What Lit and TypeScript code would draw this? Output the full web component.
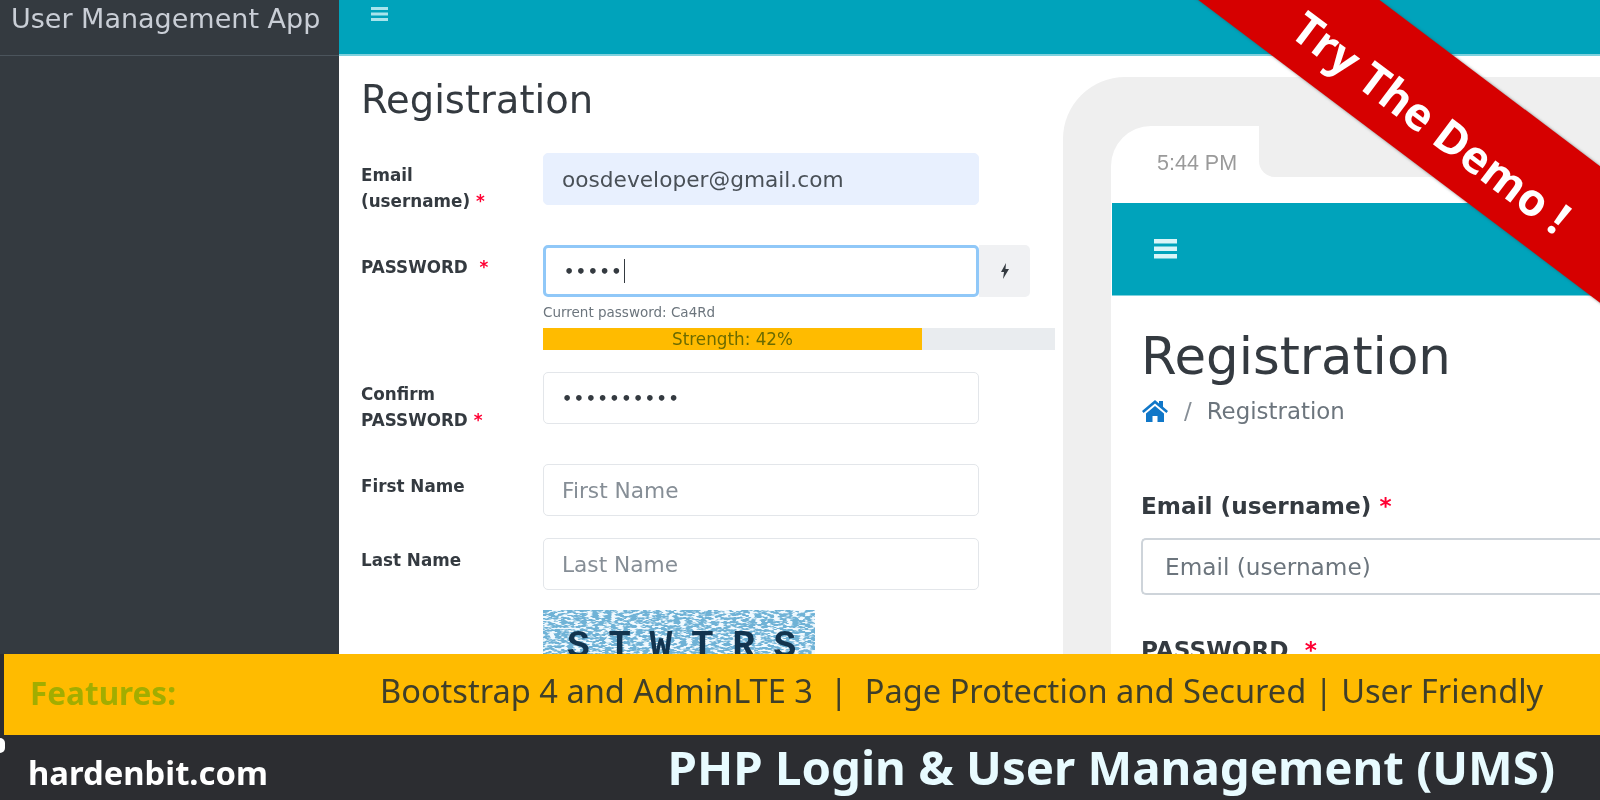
import { LitElement, html, css } from "lit";
import { customElement } from "lit/decorators.js";

@customElement("app-root")
export class AppRoot extends LitElement {
  static styles = css`
    :host { display: block; width: 1600px; height: 800px; overflow: hidden; position: relative; background: #2c2d31; font-family: "DejaVu Sans", sans-serif; filter: blur(0.45px); }
    .top { height: 654px; display: grid; grid-template-columns: 339px 1fr; overflow: hidden; background: #343a40; }
    .side { background: #343a40; }
    .brand { border-bottom: 1px solid #4b545c; color: #c9ced6; font-size: 27px; line-height: 36px; padding: 1px 0 0 11px; box-sizing: border-box; height: 56px; white-space: nowrap; }
    .main { background: #fff; display: flex; flex-direction: column; min-width: 0; }
    .head { height: 56px; box-sizing: border-box; flex: none; background: #00a3bb; border-bottom: 2px solid #7fd1dd; padding: 7px 0 0 32px; }
    .burger { display: block; }
    .body { flex: 1; display: flex; min-height: 0; }
    .form { width: 724px; flex: none; padding: 0 0 0 22px; box-sizing: border-box; }
    h1 { margin: 0; font-weight: 400; color: #343a40; font-size: 38.500px; line-height: 46px; padding-top: 21px; height: 97px; box-sizing: border-box; }
    .row { display: grid; grid-template-columns: 182px 436px 51px; grid-template-rows: 52px; align-items: start; }
    .lab { font-size: 16.800px; font-weight: 700; color: #343a40; line-height: 26px; padding-top: 9px; white-space: nowrap; }
    .star { color: #ff0033; }
    .inp { height: 52px; box-sizing: border-box; border: 1.5px solid #e3e6ea; border-radius: 5px; background: #fff; display: flex; align-items: center; padding-left: 18px; font-size: 21.700px; color: #868e96; }
    .email { background: #e8f0fe; border-color: #e8f0fe; color: #495057; }
    .focus { border: 3px solid #90c8f8; color: #343a40; }
    .dots { color: #343a40; letter-spacing: 1.600px; font-size: 16px; font-weight: 700; }
    .caret { width: 1px; height: 24px; background: #343a40; margin-left: 1px; }
    .addon { height: 52px; background: #f0f1f3; border-radius: 0 5px 5px 0; display: flex; align-items: center; justify-content: center; }
    .hint { font-size: 13.500px; color: #6c757d; margin: 7px 0 0 182px; line-height: 16px; white-space: nowrap; }
    .meter { margin: 8px 0 0 182px; width: 512px; height: 22px; background: #e9ecef; }
    .fill { height: 100%; width: 379px; background: #ffbb00; text-align: center; font-size: 16.800px; line-height: 22px; color: #6b6b00; white-space: nowrap; }
    .captcha { margin: 0 0 0 182px; width: 272px; height: 60px; position: relative; overflow: hidden; background: #6fb2d6; }
    .captcha svg { position: absolute; inset: 0; }
    .letters { position: absolute; left: 24px; top: 18px; line-height: 1; font-family: "Liberation Mono", monospace; font-weight: 700; font-size: 38px; letter-spacing: 18.500px; color: #12344f; white-space: nowrap; }
    .phone { flex: 1; position: relative; min-width: 0; }
    .frame { position: absolute; left: 0; top: 21px; width: 640px; height: 700px; box-sizing: border-box; background: #efefef; border-radius: 62px 0 0 0; padding: 49px 0 0 48px; }
    .screen { background: #fff; height: 100%; border-radius: 40px 0 0 0; position: relative; }
    .notchwrap { position: absolute; left: 148px; top: 0; width: 360px; height: 51px; background: #efefef; border-radius: 0 0 0 16px; }
    .time { position: absolute; left: 46px; top: 25px; font-family: "Liberation Sans", sans-serif; font-size: 21.500px; color: #9a9a9a; white-space: nowrap; }
    .phead { position: absolute; left: 1px; right: 0; top: 77px; height: 93px; background: #00a3bb; border-bottom: 1px solid #7fd1dd; box-sizing: border-box; }
    .phead svg { position: absolute; left: 42px; top: 36px; }
    .pcontent { position: absolute; left: 30px; top: 200px; width: 540px; white-space: nowrap; }
    .pcontent h2 { margin: 0; font-weight: 400; font-size: 51.400px; line-height: 60px; color: #343a40; }
    .crumb { display: flex; align-items: center; font-size: 22.900px; color: #6c757d; margin-top: 10px; height: 30px; }
    .sep { margin: 0 15px; color: #868e96; }
    .plab { font-weight: 700; font-size: 23.200px; color: #343a40; margin-top: 65px; line-height: 30px; }
    .pinp { height: 57px; box-sizing: border-box; border: 2px solid #ced4da; border-right: 0; border-radius: 5px 0 0 5px; margin-top: 17px; padding-left: 22px; display: flex; align-items: center; color: #6c757d; font-size: 23.200px; }
    .plab2 { margin-top: 40px; }
    .ribbon { position: absolute; left: 1101px; top: 45px; width: 640px; height: 109px; background: #d60000; transform: rotate(37deg); display: flex; align-items: center; justify-content: center; color: #fff; font-family: "Open Sans", sans-serif; font-weight: 700; font-size: 45px; box-shadow: 0 0 3px rgba(60,60,60,.6); white-space: nowrap; }
    .ribbon span { position: relative; top: 11px; left: 22px; }
    .bar { height: 81px; margin-left: 4px; background: #ffbb00; display: flex; align-items: center; font-family: "Noto Sans", sans-serif; font-size: 32.600px; color: #3f3f2a; white-space: nowrap; position: relative; padding-bottom: 9px; box-sizing: border-box; }
    .bar b { position: absolute; left: 26px; top: 17px; color: #a2ad00; font-weight: 700; font-size: 31.500px; }
    .bar span { margin-left: 376px; }
    .foot { height: 65px; position: relative; display: flex; align-items: center; justify-content: space-between; padding: 0 45px 0 28px; font-weight: 700; white-space: nowrap; font-family: "Noto Sans", sans-serif; }
    .url { color: #fff; font-size: 32.800px; padding-top: 12px; line-height: 1; }
    .title { color: #e8fbff; font-size: 47.400px; line-height: 1; padding-bottom: 2px; }
    .dot { position: absolute; left: -4px; top: 3px; width: 9px; height: 15px; background: #fff; border-radius: 0 5px 5px 0; }
  `;

  private field(label: unknown, cls: string, content: unknown, gap: number) {
    return html`<div class="row" style="margin-bottom:${gap}px"><div class="lab">${label}</div><div class="inp ${cls}">${content}</div></div>`;
  }

  render() {
    const star = html`<span class="star">*</span>`;
    return html`
      <div class="top">
        <aside class="side"><div class="brand">User Management App</div></aside>
        <div class="main">
          <div class="head">
            <svg class="burger" width="17" height="16" viewBox="0 0 17 16"><path d="M0 0h17v3H0zM0 5.500h17v3H0zM0 11h17v3H0z" fill="#a8e4ec"/></svg>
          </div>
          <div class="body">
            <section class="form">
              <h1>Registration</h1>
              ${this.field(html`Email<br />(username) ${star}`, "email", "oosdeveloper@gmail.com", 40)}
              <div class="row">
                <div class="lab">PASSWORD&nbsp; ${star}</div>
                <div class="inp focus"><span class="dots">•••••</span><span class="caret"></span></div>
                <div class="addon"><svg width="10" height="16" viewBox="0 0 10 16"><path d="M6 0 1 9h3l-1 7 6-10H5.500z" fill="#343a40"/></svg></div>
              </div>
              <div class="hint">Current password: Ca4Rd</div>
              <div class="meter"><div class="fill">Strength: 42%</div></div>
              <div style="height:22px"></div>
              ${this.field(html`Confirm<br />PASSWORD ${star}`, "", html`<span class="dots">••••••••••</span>`, 40)}
              ${this.field("First Name", "", "First Name", 22)}
              ${this.field("Last Name", "", "Last Name", 20)}
              <div class="captcha">
                <svg width="272" height="60"><filter id="n"><feTurbulence type="fractalNoise" baseFrequency="0.16 0.5" numOctaves="2" seed="4"/><feColorMatrix values="0 0 0 0 0.88  0 0 0 0 0.95  0 0 0 0 0.99  0 0 0 7 -3.2"/></filter><rect width="272" height="60" filter="url(#n)"/></svg>
                <div class="letters">STWTRS</div>
              </div>
            </section>
            <section class="phone">
              <div class="frame">
                <div class="screen">
                  <div class="notchwrap"></div>
                  <div class="time">5:44 PM</div>
                  <div class="phead"><svg width="23" height="20" viewBox="0 0 24 20" preserveAspectRatio="none"><path d="M0 0h24v4.500H0zM0 7.500h24V12H0zM0 15h24v4.500H0z" fill="#d8f5f8"/></svg></div>
                  <div class="pcontent">
                    <h2>Registration</h2>
                    <div class="crumb">
                      <svg width="28" height="24" viewBox="0 0 28 24"><path d="M14 1 1 12l1.600 2L14 4.500 25.400 14l1.600-2-5-4.200V2h-4v2.500zM5 14.500V23h6.500v-6h5v6H23v-8.500L14 7z" fill="#1077c8"/></svg>
                      <span class="sep">/</span><span>Registration</span>
                    </div>
                    <div class="plab">Email (username) ${star}</div>
                    <div class="pinp">Email (username)</div>
                    <div class="plab plab2">PASSWORD&nbsp; ${star}</div>
                  </div>
                </div>
              </div>
            </section>
          </div>
        </div>
      </div>
      <div class="ribbon"><span>Try The Demo !</span></div>
      <div class="bar"><b>Features:</b><span>Bootstrap 4 and AdminLTE 3&nbsp; |&nbsp; Page Protection and Secured | User Friendly</span></div>
      <div class="foot"><div class="dot"></div><div class="url">hardenbit.com</div><div class="title">PHP Login &amp; User Management (UMS)</div></div>
    `;
  }
}
